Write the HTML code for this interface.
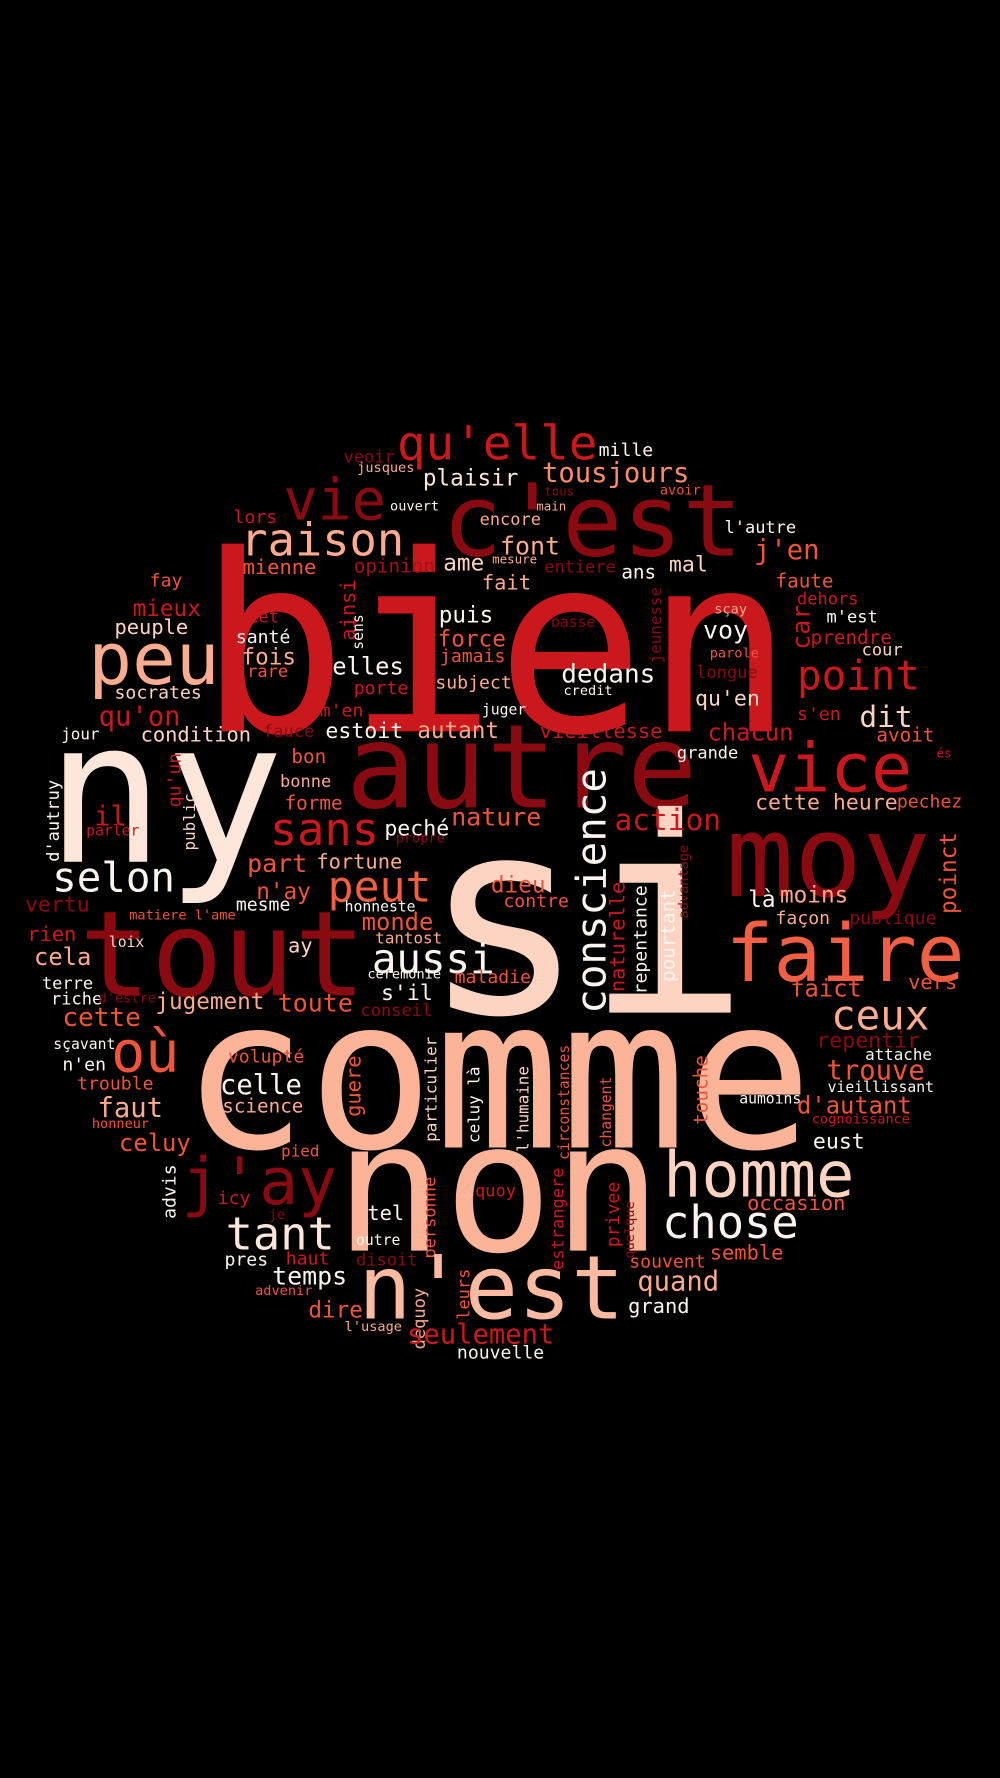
<!DOCTYPE html>
<html><head><meta charset="utf-8"><style>
html,body{margin:0;padding:0;background:#000;width:1000px;height:1778px;overflow:hidden}
svg{display:block}
text{font-family:"DejaVu Sans Mono","Liberation Mono",monospace}
.d{fill:#8a0a12}.r{fill:#cb181d}.o{fill:#f0553a}.s{fill:#fcab8e}.l{fill:#fdd3c1}.p{fill:#fee6db}.w{fill:#fff5f0}
</style></head><body>
<svg width="1000" height="1778" viewBox="0 0 882 1568" xmlns="http://www.w3.org/2000/svg">
<rect width="882" height="1568" fill="#000"/>
<text x="175" y="645" font-size="218" class="r">bien</text>
<text x="305" y="712" font-size="103" class="d">autre</text>
<text x="40" y="760" font-size="175" class="p">ny</text>
<text x="640" y="790" font-size="100" class="d">moy</text>
<text x="70" y="878" font-size="105" class="d">tout</text>
<text x="372" y="893" font-size="240" class="l">si</text>
<text x="160" y="1012" font-size="185" fill="#fcb499">comme</text>
<text x="295" y="1103" font-size="160" fill="#fcb499">non</text>
<text x="390" y="490" font-size="88" class="d">c'est</text>
<text x="350" y="405" font-size="42" class="r">qu'elle</text>
<text x="528" y="402" font-size="16" class="w">mille</text>
<text x="303" y="408" font-size="15" class="d">veoir</text>
<text x="315" y="416" font-size="12" class="s">jusques</text>
<text x="373" y="428" font-size="20" class="p">plaisir</text>
<text x="478" y="425" font-size="24" fill="#fc8d6a">tousjours</text>
<text x="250" y="458" font-size="50" class="d">vie</text>
<text x="480" y="437" font-size="11" class="d">tous</text>
<text x="473" y="450" font-size="11" class="s">main</text>
<text x="582" y="436" font-size="12" class="o">avoir</text>
<text x="344" y="450" font-size="12" class="w">ouvert</text>
<text x="206" y="461" font-size="16" class="r">lors</text>
<text x="423" y="463" font-size="15" class="s">encore</text>
<text x="639" y="470" font-size="15" class="w">l'autre</text>
<text x="212" y="490" font-size="40" class="s">raison</text>
<text x="441" y="489" font-size="22" class="s">font</text>
<text x="665" y="493" font-size="24" class="o">j'en</text>
<text x="391" y="503" font-size="20" class="l">ame</text>
<text x="434" y="497" font-size="11" class="s">mesure</text>
<text x="480" y="505" font-size="15" class="d">entiere</text>
<text x="312" y="505" font-size="17" fill="#a50f15">opinion</text>
<text x="214" y="506" font-size="18" class="o">mienne</text>
<text x="548" y="510" font-size="17" class="w">ans</text>
<text x="590" y="504" font-size="19" class="l">mal</text>
<text x="132" y="517" font-size="16" class="o">fay</text>
<text x="425" y="520" font-size="18" class="s">fait</text>
<text x="684" y="518" font-size="17" class="o">faute</text>
<text x="703" y="533" font-size="15" class="r">dehors</text>
<text transform="translate(313,565) rotate(-90)" font-size="18" class="r">ainsi</text>
<text transform="translate(320,573) rotate(-90)" font-size="13" class="w">sens</text>
<text transform="translate(583,585) rotate(-90)" font-size="14" class="d">jeunesse</text>
<text transform="translate(714,573) rotate(-90)" font-size="22" class="r">car</text>
<text x="117" y="543" font-size="20" class="r">mieux</text>
<text x="219" y="549" font-size="15" class="r">cet</text>
<text x="387" y="549" font-size="20" class="w">puis</text>
<text x="486" y="553" font-size="13" class="d">basse</text>
<text x="729" y="549" font-size="15" class="w">m'est</text>
<text x="101" y="559" font-size="18" class="l">peuple</text>
<text x="620" y="563" font-size="22" class="w">voy</text>
<text x="715" y="568" font-size="17" class="r">prendre</text>
<text x="630" y="541" font-size="12" class="s">sçay</text>
<text x="78" y="603" font-size="64" fill="#fcad8f">peu</text>
<text x="208" y="567" font-size="16" class="w">santé</text>
<text x="386" y="570" font-size="20" class="o">force</text>
<text x="626" y="580" font-size="12" class="o">parole</text>
<text x="760" y="578" font-size="15" class="l">cour</text>
<text x="213" y="586" font-size="20" class="s">fois</text>
<text x="293" y="595" font-size="21" class="w">elles</text>
<text x="388" y="584" font-size="16" class="o">jamais</text>
<text x="218" y="597" font-size="15" class="o">rare</text>
<text x="495" y="602" font-size="23" class="w">dedans</text>
<text x="703" y="608" font-size="36" class="r">point</text>
<text x="614" y="598" font-size="15" class="d">longue</text>
<text x="384" y="607" font-size="16" class="s">subject</text>
<text x="101" y="616" font-size="16" class="l">socrates</text>
<text x="312" y="612" font-size="16" class="r">porte</text>
<text x="497" y="613" font-size="12" class="w">credit</text>
<text x="613" y="622" font-size="19" class="l">qu'en</text>
<text x="87" y="640" font-size="24" class="r">qu'on</text>
<text x="282" y="632" font-size="16" class="r">m'en</text>
<text x="425" y="630" font-size="13" class="w">juger</text>
<text x="703" y="635" font-size="16" class="r">s'en</text>
<text x="758" y="641" font-size="26" class="l">dit</text>
<text x="54" y="652" font-size="14" class="w">jour</text>
<text x="124" y="654" font-size="18" class="l">condition</text>
<text x="232" y="650" font-size="15" class="d">fauce</text>
<text x="287" y="651" font-size="19" class="w">estoit</text>
<text x="368" y="651" font-size="20" class="s">autant</text>
<text x="476" y="651" font-size="18" class="r">vieillesse</text>
<text x="624" y="653" font-size="21" class="r">chacun</text>
<text x="773" y="654" font-size="17" class="o">avoit</text>
<text x="257" y="673" font-size="17" class="o">bon</text>
<text x="597" y="669" font-size="15" class="w">grande</text>
<text x="660" y="698" font-size="60" class="r">vice</text>
<text x="826" y="668" font-size="11" class="r">és</text>
<text transform="translate(159,712) rotate(-90)" font-size="16" class="r">qu'un</text>
<text x="247" y="694" font-size="15" class="s">bonne</text>
<text transform="translate(52,760) rotate(-90)" font-size="15" class="w">d'autruy</text>
<text transform="translate(172,750) rotate(-90)" font-size="14" class="l">public</text>
<text x="251" y="714" font-size="17" class="o">forme</text>
<text x="666" y="714" font-size="19" class="s">cette heure</text>
<text x="791" y="712" font-size="16" class="o">pechez</text>
<text x="83" y="728" font-size="24" class="r">il</text>
<text x="238" y="745" font-size="40" class="r">sans</text>
<text x="398" y="728" font-size="22" class="o">nature</text>
<text transform="translate(534,894) rotate(-90)" font-size="36" class="w">conscience</text>
<text x="542" y="732" font-size="26" class="r">action</text>
<text x="76" y="737" font-size="13" class="r">parler</text>
<text x="339" y="737" font-size="19" class="w">peché</text>
<text x="349" y="743" font-size="12" class="d">propre</text>
<text x="218" y="769" font-size="22" class="o">part</text>
<text x="46" y="786" font-size="36" class="w">selon</text>
<text x="279" y="766" font-size="18" class="s">fortune</text>
<text x="289" y="795" font-size="38" fill="#f4603e">peut</text>
<text x="226" y="793" font-size="20" class="o">n'ay</text>
<text x="433" y="787" font-size="20" class="o">dieu</text>
<text transform="translate(843,806) rotate(-90)" font-size="20" class="o">poinct</text>
<text transform="translate(551,875) rotate(-90)" font-size="18" class="r">naturelle</text>
<text transform="translate(570,877) rotate(-90)" font-size="16" class="w">repentance</text>
<text transform="translate(607,810) rotate(-90)" font-size="12" class="d">advantage</text>
<text transform="translate(595,866) rotate(-90)" font-size="17" class="w">pourtant</text>
<text x="22" y="804" font-size="19" class="d">vertu</text>
<text x="208" y="803" font-size="16" class="w">mesme</text>
<text x="444" y="800" font-size="16" class="o">contre</text>
<text x="660" y="800" font-size="20" class="w">là</text>
<text x="688" y="796" font-size="20" class="s">moins</text>
<text x="304" y="804" font-size="13" class="w">honneste</text>
<text x="114" y="811" font-size="12" class="o">matiere l'ame</text>
<text x="640" y="865" font-size="70" fill="#f26044">faire</text>
<text x="684" y="815" font-size="16" class="s">façon</text>
<text x="749" y="815" font-size="16" class="d">publique</text>
<text x="319" y="820" font-size="21" class="o">monde</text>
<text x="24" y="830" font-size="18" class="r">rien</text>
<text x="331" y="832" font-size="14" class="s">tantost</text>
<text x="96" y="835" font-size="13" class="l">loix</text>
<text x="254" y="840" font-size="18" class="l">ay</text>
<text x="328" y="858" font-size="36" class="w">aussi</text>
<text x="30" y="851" font-size="21" class="s">cela</text>
<text x="324" y="863" font-size="12" class="w">ceremonie</text>
<text x="401" y="867" font-size="16" class="o">maladie</text>
<text x="801" y="872" font-size="18" class="o">vers</text>
<text x="37" y="872" font-size="15" class="w">terre</text>
<text x="697" y="879" font-size="21" class="o">faict</text>
<text x="45" y="886" font-size="15" class="w">riche</text>
<text x="87" y="884" font-size="12" class="d">d'estre</text>
<text x="137" y="890" font-size="20" class="s">jugement</text>
<text x="245" y="892" font-size="22" class="o">toute</text>
<text x="336" y="882" font-size="19" class="w">s'il</text>
<text x="318" y="896" font-size="15" class="d">conseil</text>
<text x="733" y="908" font-size="36" class="s">ceux</text>
<text x="55" y="905" font-size="23" class="o">cette</text>
<text x="98" y="945" font-size="50" class="o">où</text>
<text x="720" y="924" font-size="19" class="d">repentir</text>
<text x="47" y="925" font-size="13" class="w">sçavant</text>
<text x="763" y="935" font-size="14" class="w">attache</text>
<text transform="translate(385,1007) rotate(-90)" font-size="14" class="l">particulier</text>
<text x="201" y="937" font-size="16" class="o">volupté</text>
<text x="55" y="944" font-size="16" class="w">n'en</text>
<text x="729" y="952" font-size="24" class="o">trouve</text>
<text x="194" y="965" font-size="24" class="w">celle</text>
<text transform="translate(318,985) rotate(-90)" font-size="18" class="o">guere</text>
<text transform="translate(423,1008) rotate(-90)" font-size="14" class="w">celuy là</text>
<text transform="translate(466,1016) rotate(-90)" font-size="14" class="l">l'humaine</text>
<text transform="translate(502,1023) rotate(-90)" font-size="13" class="o">circonstances</text>
<text transform="translate(539,1012) rotate(-90)" font-size="13" class="o">changent</text>
<text transform="translate(624,992) rotate(-90)" font-size="17" class="o">touche</text>
<text x="68" y="961" font-size="16" class="o">trouble</text>
<text x="730" y="963" font-size="13" class="w">vieillissant</text>
<text x="86" y="985" font-size="24" class="s">faut</text>
<text x="196" y="981" font-size="17" class="s">science</text>
<text x="652" y="973" font-size="13" class="w">aumoins</text>
<text x="703" y="982" font-size="21" class="o">d'autant</text>
<text x="81" y="995" font-size="12" class="o">honneur</text>
<text x="716" y="991" font-size="12" class="r">cognoissance</text>
<text x="105" y="1015" font-size="21" class="o">celuy</text>
<text x="248" y="1020" font-size="14" class="o">pied</text>
<text x="717" y="1013" font-size="19" class="w">eust</text>
<text transform="translate(155,1075) rotate(-90)" font-size="16" class="w">advis</text>
<text x="160" y="1062" font-size="57" class="d">j'ay</text>
<text x="585" y="1055" font-size="56" class="l">homme</text>
<text transform="translate(497,1120) rotate(-90)" font-size="15" class="r">estrangere</text>
<text transform="translate(546,1100) rotate(-90)" font-size="16" class="r">privee</text>
<text transform="translate(384,1110) rotate(-90)" font-size="15" class="o">personne</text>
<text transform="translate(559,1110) rotate(-90)" font-size="12" class="d">quelque</text>
<text x="192" y="1062" font-size="16" class="r">icy</text>
<text x="419" y="1055" font-size="15" class="r">quoy</text>
<text x="659" y="1067" font-size="18" class="o">occasion</text>
<text x="199" y="1102" font-size="40" class="p">tant</text>
<text x="584" y="1092" font-size="40" class="w">chose</text>
<text x="324" y="1076" font-size="18" class="w">tel</text>
<text x="237" y="1075" font-size="12" class="d">je</text>
<text x="314" y="1098" font-size="13" class="w">outre</text>
<text x="626" y="1111" font-size="18" class="o">semble</text>
<text x="198" y="1116" font-size="16" class="w">pres</text>
<text x="252" y="1115" font-size="16" class="r">haut</text>
<text x="314" y="1116" font-size="15" class="d">disoit</text>
<text x="555" y="1118" font-size="16" class="o">souvent</text>
<text x="240" y="1133" font-size="22" class="w">temps</text>
<text x="316" y="1163" font-size="78" fill="#fcbba1">n'est</text>
<text x="562" y="1138" font-size="24" class="s">quand</text>
<text x="225" y="1142" font-size="12" class="o">advenir</text>
<text transform="translate(375,1190) rotate(-90)" font-size="15" class="s">dequoy</text>
<text transform="translate(414,1164) rotate(-90)" font-size="15" class="o">leurs</text>
<text x="554" y="1158" font-size="18" class="w">grand</text>
<text x="272" y="1162" font-size="20" class="o">dire</text>
<text x="304" y="1174" font-size="12" class="s">l'usage</text>
<text x="359" y="1185" font-size="24" class="r">seulement</text>
<text x="403" y="1198" font-size="16" class="w">nouvelle</text>
</svg>
</body></html>
